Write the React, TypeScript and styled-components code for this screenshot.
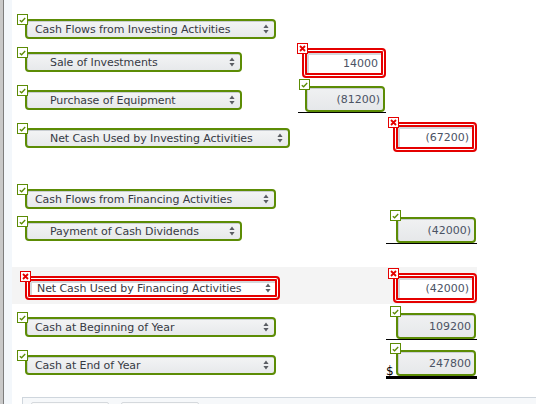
import React from "react";
import styled, { createGlobalStyle, css } from "styled-components";

const GlobalStyle = createGlobalStyle`
  html, body {
    margin: 0;
    padding: 0;
    background: #ffffff;
  }
  body {
    font-family: "DejaVu Sans", Verdana, sans-serif;
    width: 536px;
    height: 404px;
    overflow: hidden;
  }
`;

const GREEN = "#5c8c05";
const RED = "#e50000";

type Status = "ok" | "bad";

const Frame = styled.div`
  display: flex;
  height: 404px;
  width: 536px;
  overflow: hidden;
`;

const Rail = styled.div`
  width: 3px;
  background: #c9c9c9;
  border-right: 1px solid #7d7d7d;
  flex: none;
`;

const Strip = styled.div`
  width: 8px;
  background: #f3f7fb;
  flex: none;
`;

const Content = styled.div`
  flex: 1;
  display: flex;
  flex-direction: column;
  padding-top: 13px;
  min-height: 0;
`;

const Row = styled.div<{ $h: number; $shade?: boolean }>`
  flex: none;
  display: grid;
  grid-template-columns: 286px 88px 91px;
  align-items: start;
  height: ${(p) => p.$h}px;
  width: 465px;
  background: ${(p) => (p.$shade ? "#f4f4f4" : "transparent")};
`;

const Cell = styled.div<{ $top: number; $line?: "single" | "double" }>`
  display: flex;
  flex-direction: column;
  align-items: flex-end;
  padding-top: ${(p) => p.$top}px;
  box-sizing: border-box;
  position: relative;
  ${(p) =>
    p.$line &&
    css`
      border-bottom: ${p.$line === "double" ? "3px" : "1px"} solid #000;
    `}
`;

const LabelCell = styled.div<{ $top: number }>`
  display: flex;
  padding-top: ${(p) => p.$top}px;
  padding-left: 13px;
`;

const Anchor = styled.div`
  position: relative;
  display: flex;
`;

const Badge = styled.span<{ $status: Status; $x: number; $y: number }>`
  position: absolute;
  left: ${(p) => p.$x}px;
  top: ${(p) => p.$y}px;
  width: 11px;
  height: 11px;
  box-sizing: border-box;
  background: #fff;
  border: 1px solid ${(p) => (p.$status === "ok" ? GREEN : RED)};
  display: flex;
  align-items: center;
  justify-content: center;
  z-index: 2;
`;

const SelectBox = styled.div<{ $w: number; $status: Status; $indent?: boolean }>`
  box-sizing: border-box;
  width: ${(p) => p.$w}px;
  display: flex;
  align-items: center;
  justify-content: space-between;
  color: #373a44;
  font-size: 11px;
  letter-spacing: -0.08px;
  white-space: pre;
  ${(p) =>
    p.$status === "ok"
      ? css`
          height: 20px;
          border: 2px solid ${GREEN};
          border-radius: 4px;
          background: linear-gradient(#f3f4f5, #e7e9eb);
          box-shadow: inset 1px 1px 0 #c9cdd2;
          padding: 0 5px 0 ${p.$indent ? 23 : 8}px;
        `
      : css`
          height: 24px;
          border: 2px solid ${RED};
          border-radius: 4px;
          background: #fff;
          box-shadow: inset 0 0 0 1px #fff, inset 0 0 0 3px ${RED},
            inset 1px 1px 0 4px #d4d7db;
          padding: 0 7px 0 ${p.$indent ? 26 : 10}px;
        `}
`;

const NumberBox = styled.div<{ $status: Status }>`
  box-sizing: border-box;
  display: flex;
  align-items: center;
  justify-content: flex-end;
  font-size: 11px;
  color: #4b5364;
  border-radius: 4px;
  ${(p) =>
    p.$status === "ok"
      ? css`
          width: 80px;
          height: 26px;
          margin-right: 1px;
          border: 2px solid ${GREEN};
          background: linear-gradient(#f0f1f2, #e6e8ea);
          box-shadow: inset 1px 1px 0 #c9cdd2;
          padding-right: 3px;
        `
      : css`
          width: 84px;
          height: 30px;
          border: 2px solid ${RED};
          background: #fff;
          box-shadow: inset 0 0 0 1px #fff, inset 0 0 0 3px ${RED},
            inset 1px 1px 0 4px #d4d7db;
          padding-right: 6px;
        `}
`;

const Dollar = styled.span`
  position: absolute;
  left: 0;
  bottom: -1px;
  font-size: 12px;
  line-height: 12px;
  color: #000;
`;

const Footer = styled.div`
  margin-top: 15px;
  margin-left: 10px;
  flex: none;
  height: 30px;
  border-top: 1px solid #cfd6dd;
  border-left: 1px solid #cfd6dd;
  background: #f6f8fa;
  display: flex;
  gap: 12px;
  padding: 4px 0 0 8px;
`;

const FooterButton = styled.div`
  width: 76px;
  height: 20px;
  border: 1px solid #d5d9dd;
  border-radius: 2px;
  background: #fbfbfb;
`;

const Check = () => (
  <svg width="7" height="6" viewBox="0 0 7 6">
    <path d="M0.8 3.2 L2.6 4.8 L6.2 1" fill="none" stroke={GREEN} strokeWidth="1.3" />
  </svg>
);

const Cross = () => (
  <svg width="7" height="7" viewBox="0 0 7 7">
    <path d="M1 1 L6 6 M6 1 L1 6" stroke={RED} strokeWidth="1.8" />
  </svg>
);

const Arrows = () => (
  <svg width="6" height="10" viewBox="0 0 6 10">
    <path d="M3 0.5 L5.6 4 L0.4 4 Z M3 9.5 L5.6 6 L0.4 6 Z" fill="#5a5d63" />
  </svg>
);

const Mark = ({ status, x, y }: { status: Status; x: number; y: number }) => (
  <Badge $status={status} $x={x} $y={y}>
    {status === "ok" ? <Check /> : <Cross />}
  </Badge>
);

const Select = ({
  label,
  width,
  status = "ok",
  indent,
}: {
  label: string;
  width: number;
  status?: Status;
  indent?: boolean;
}) => (
  <Anchor>
    <Mark status={status} x={status === "ok" ? -8 : -5} y={-5} />
    <SelectBox $w={width} $status={status} $indent={indent}>
      <span>{label}</span>
      <Arrows />
    </SelectBox>
  </Anchor>
);

const Amount = ({ value, status = "ok" }: { value: string; status?: Status }) => (
  <Anchor>
    <Mark status={status} x={status === "ok" ? -6 : -5} y={status === "ok" ? -7 : -5} />
    <NumberBox $status={status}>{value}</NumberBox>
  </Anchor>
);

export default function App() {
  return (
    <>
      <GlobalStyle />
      <Frame>
        <Rail />
        <Strip />
        <Content>
          <Row $h={31}>
            <LabelCell $top={6}>
              <Select label="Cash Flows from Investing Activities" width={251} />
            </LabelCell>
          </Row>
          <Row $h={36}>
            <LabelCell $top={8}>
              <Select label="Sale of Investments" width={217} indent />
            </LabelCell>
            <Cell $top={4}>
              <Amount value="14000" status="bad" />
            </Cell>
          </Row>
          <Row $h={38}>
            <LabelCell $top={10}>
              <Select label="Purchase of Equipment" width={217} indent />
            </LabelCell>
            <Cell $top={6} $line="single">
              <Amount value="(81200)" />
            </Cell>
          </Row>
          <Row $h={42}>
            <LabelCell $top={10}>
              <Select label="Net Cash Used by Investing Activities" width={265} indent />
            </LabelCell>
            <div />
            <Cell $top={4}>
              <Amount value="(67200)" status="bad" />
            </Cell>
          </Row>
          <Row $h={20} />
          <Row $h={32}>
            <LabelCell $top={9}>
              <Select label="Cash Flows from Financing Activities" width={251} />
            </LabelCell>
          </Row>
          <Row $h={38}>
            <LabelCell $top={9}>
              <Select label="Payment of Cash Dividends" width={217} indent />
            </LabelCell>
            <div />
            <Cell $top={5} $line="single">
              <Amount value="(42000)" />
            </Cell>
          </Row>
          <Row $h={17} />
          <Row $h={37} $shade>
            <LabelCell $top={9}>
              <Select label="Net Cash Used by Financing Activities" width={255} status="bad" />
            </LabelCell>
            <div />
            <Cell $top={6}>
              <Amount value="(42000)" status="bad" />
            </Cell>
          </Row>
          <Row $h={38}>
            <LabelCell $top={13}>
              <Select label="Cash at Beginning of Year" width={251} />
            </LabelCell>
            <div />
            <Cell $top={9} $line="single">
              <Amount value="109200" />
            </Cell>
          </Row>
          <Row $h={40}>
            <LabelCell $top={13}>
              <Select label="Cash at End of Year" width={251} />
            </LabelCell>
            <div />
            <Cell $top={8} $line="double">
              <Dollar>$</Dollar>
              <Amount value="247800" />
            </Cell>
          </Row>
          <Footer>
            <FooterButton />
            <FooterButton />
          </Footer>
        </Content>
      </Frame>
    </>
  );
}
